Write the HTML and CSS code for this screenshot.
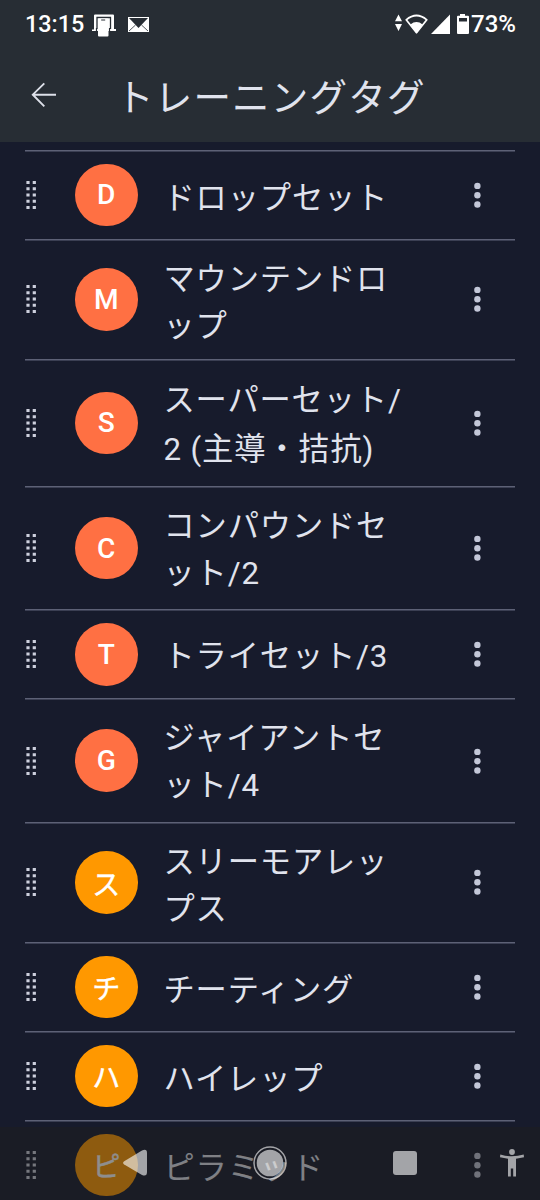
FILE: index.html
```html
<!DOCTYPE html>
<html lang="ja">
<head>
    <meta charset="UTF-8">
    <title>トレーニングタグ</title>
    <link rel="stylesheet" href="styles.css">
</head>
<body>
    <!-- Shared icons -->
    <svg class="defs" width="0" height="0">
        <symbol id="grip" viewBox="0 0 10 30">
            <path d="M2,1 V30 M8.3,1 V30" fill="none" stroke="currentColor" stroke-width="3.2" stroke-dasharray="3 3.25"/>
        </symbol>
        <symbol id="more" viewBox="0 0 8 28">
            <circle cx="4.4" cy="4.9" r="3.2"/>
            <circle cx="4.4" cy="14.2" r="3.2"/>
            <circle cx="4.4" cy="23.5" r="3.2"/>
        </symbol>
    </svg>

    <header class="header">
        <div class="status-bar">
            <span class="time">13:15</span>
            <svg class="cast-icon" width="24" height="24" viewBox="0 0 24 24">
                <path d="M2,15.5 V1.5 Q2,0.5 3,0.5 H21 Q22,0.5 22,1.5 V15 H24 V17 H0 V15.5 Z" fill="#fff"/>
                <path d="M5,15 V3.5 H18.5 V15" fill="none" stroke="#272d34" stroke-width="1.3"/>
                <path d="M4.5,14 V19 H17.5 V14" fill="none" stroke="#272d34" stroke-width="1.2"/>
                <rect x="6" y="4.5" width="10.5" height="18" rx="1" fill="#fff"/>
                <path d="M9.2,6 H13.2" stroke="#272d34" stroke-width="1"/>
            </svg>
            <svg class="mail-icon" width="21" height="15" viewBox="0 0 21 15">
                <rect width="21" height="15" fill="#fff"/>
                <path d="M1,1 H20 L10.5,11 Z" fill="#272d34"/>
                <path d="M1,14 L7.5,8 M20,14 L13.5,8" stroke="#272d34" stroke-width="0.8"/>
            </svg>
            <svg class="signal-icons" width="76" height="24" viewBox="0 0 76 24">
                <path d="M0,9.3 L3.5,2.5 L7,9.3 Z M0,12 H7 L3.5,19 Z" fill="#fff"/>
                <path d="M11.2,7.8 Q21.5,-0.8 31.8,7.8 L21.5,20.7 Z" fill="none" stroke="#fff" stroke-width="1.7" stroke-linejoin="round"/>
                <path d="M15.4,12.4 Q21.5,7.7 27.6,12.4 L21.5,21.5 Z" fill="#fff"/>
                <path d="M36,22 L55,2.5 V22 Z" fill="#fff"/>
                <path d="M65,2 H70 V3.7 H73 Q74,3.7 74,4.7 V21 Q74,22 73,22 H63 Q62,22 62,21 V4.7 Q62,3.7 63,3.7 H65 Z" fill="#fff"/>
                <path d="M64,6 H72 V9.5 H64 Z" fill="#272d34"/>
            </svg>
            <span class="battery">73%</span>
        </div>
        <div class="app-bar">
            <svg class="back-icon" width="26" height="26" viewBox="0 0 26 26">
                <path d="M25,12.7 H2 M13.3,1.3 L1.8,12.7 L13.3,24.3" fill="none" stroke="#dde0e9" stroke-width="1.9"/>
            </svg>
            <h1>トレーニングタグ</h1>
        </div>
    </header>

    <main class="tag-list">
        <div class="tag">
            <svg class="grip"><use href="#grip"/></svg>
            <span class="badge">D</span>
            <span class="name">ドロップセット</span>
            <svg class="more"><use href="#more"/></svg>
        </div>
        <div class="tag double">
            <svg class="grip"><use href="#grip"/></svg>
            <span class="badge">M</span>
            <span class="name">マウンテンドロ<br>ップ</span>
            <svg class="more"><use href="#more"/></svg>
        </div>
        <div class="tag double kanji">
            <svg class="grip"><use href="#grip"/></svg>
            <span class="badge">S</span>
            <span class="name">スーパーセット/<br>2 (主導・拮抗)</span>
            <svg class="more"><use href="#more"/></svg>
        </div>
        <div class="tag double mixed">
            <svg class="grip"><use href="#grip"/></svg>
            <span class="badge">C</span>
            <span class="name">コンパウンドセ<br>ット/2</span>
            <svg class="more"><use href="#more"/></svg>
        </div>
        <div class="tag latin">
            <svg class="grip"><use href="#grip"/></svg>
            <span class="badge">T</span>
            <span class="name">トライセット/3</span>
            <svg class="more"><use href="#more"/></svg>
        </div>
        <div class="tag double mixed">
            <svg class="grip"><use href="#grip"/></svg>
            <span class="badge">G</span>
            <span class="name">ジャイアントセ<br>ット/4</span>
            <svg class="more"><use href="#more"/></svg>
        </div>
        <div class="tag double">
            <svg class="grip"><use href="#grip"/></svg>
            <span class="badge amber">ス</span>
            <span class="name">スリーモアレッ<br>プス</span>
            <svg class="more"><use href="#more"/></svg>
        </div>
        <div class="tag">
            <svg class="grip"><use href="#grip"/></svg>
            <span class="badge amber">チ</span>
            <span class="name">チーティング</span>
            <svg class="more"><use href="#more"/></svg>
        </div>
        <div class="tag">
            <svg class="grip"><use href="#grip"/></svg>
            <span class="badge amber">ハ</span>
            <span class="name">ハイレップ</span>
            <svg class="more"><use href="#more"/></svg>
        </div>
        <div class="tag">
            <svg class="grip"><use href="#grip"/></svg>
            <span class="badge amber">ピ</span>
            <span class="name">ピラミッド</span>
            <svg class="more"><use href="#more"/></svg>
        </div>
    </main>

    <!-- System navigation over the list -->
    <nav class="nav-bar">
        <svg class="nav-back" width="24" height="28" viewBox="0 0 24 28">
            <path d="M1.2,12.3 L19,1.4 Q24,-0.8 24,4 V23 Q24,28 19,26 L1.2,15.5 Q-1,14 1.2,12.3 Z"/>
        </svg>
        <svg class="nav-home" width="34" height="34" viewBox="0 0 34 34">
            <circle cx="17" cy="17" r="13.3"/>
            <circle cx="17" cy="17" r="16" fill="none" stroke="#fff" stroke-width="1.5"/>
        </svg>
        <svg class="nav-recent" width="24" height="24" viewBox="0 0 24 24">
            <rect width="24" height="24" rx="3"/>
        </svg>
        <svg class="nav-access" width="24" height="28" viewBox="0 0 24 28">
            <circle cx="12" cy="3" r="2.9"/>
            <path d="M0.3,5.5 Q12,9 23.7,5.5 L24,8.3 L16,9.8 V27.5 H13.2 V19.5 H10.8 V27.5 H8 V9.8 L0,8.3 Z"/>
        </svg>
    </nav>
</body>
</html>
```

FILE: styles.css
```css
* {
    box-sizing: border-box;
}
body {
    position: relative;
    height: 1200px;
    margin: 0;
    overflow: hidden;
    background-color: #171b2c;
    color: #e0e3ed;
    font-family: Roboto, "Noto Sans CJK JP", sans-serif;
}
svg {
    display: block;
    flex-shrink: 0;
}
.defs {
    position: absolute;
}
.header {
    height: 142px;
    background-color: #272d34;
}
.status-bar {
    display: flex;
    align-items: center;
    height: 48px;
    padding: 0 24px 0 25px;
    color: #fff;
    font-size: 24px;
    font-weight: 500;
}
.time {
    width: 67px;
    font-size: 23.4px;
    white-space: nowrap;
}
.cast-icon {
    margin-top: 3px;
}
.mail-icon {
    margin-left: 12px;
}
.signal-icons {
    margin-left: auto;
    margin-top: -1px;
}
.app-bar {
    display: flex;
    align-items: center;
    height: 94px;
    padding-left: 31px;
}
h1 {
    margin: 5px 0 0 59px;
    font-size: 37.5px;
    font-weight: 400;
    line-height: 54px;
    letter-spacing: 1.2px;
}
.tag-list {
    padding: 7.8px 25px 0;
}
.tag {
    display: flex;
    align-items: center;
    height: 89px;
    border-top: 1px solid #5d6176;
    box-shadow: inset 0 1px #3b3f53;
}
.tag.double {
    height: 120px;
}
.tag.mixed {
    height: 123.5px;
}
.tag.kanji {
    height: 127px;
}
.grip {
    width: 10px;
    height: 30px;
    margin-left: 1px;
    color: #cdd0dd;
}
.badge {
    display: flex;
    align-items: center;
    justify-content: center;
    flex-shrink: 0;
    width: 62.5px;
    height: 62.5px;
    margin-left: 39px;
    border-radius: 50%;
    background-color: #ff7043;
    color: #fff;
    font-size: 28.1px;
    font-weight: 500;
}
.amber {
    background-color: #ff9800;
    font-weight: 400;
    -webkit-text-stroke: 0.4px #fff;
}
.name {
    flex: 1;
    padding-top: 8px;
    margin-left: 26px;
    font-size: 31.25px;
    line-height: 47px;
    letter-spacing: 0.85px;
    white-space: nowrap;
}
.mixed .name {
    padding-top: 3px;
}
.latin .name {
    padding-top: 5px;
}
.kanji .name {
    padding-top: 5px;
    line-height: 49px;
}
.more {
    width: 8px;
    height: 28px;
    margin-right: 34px;
    fill: #c3c7d8;
}
.nav-bar {
    position: absolute;
    left: 0;
    right: 0;
    bottom: 0;
    display: flex;
    align-items: center;
    height: 73px;
    padding-left: 123px;
    background-color: rgba(30, 30, 30, 0.5);
    fill: #fff;
}
.nav-bar svg {
    margin-bottom: 2px;
    opacity: 0.6;
}
.nav-home {
    margin-left: 106px;
}
.nav-recent {
    margin-left: 106px;
}
.nav-access {
    margin-left: 83px;
}
```
